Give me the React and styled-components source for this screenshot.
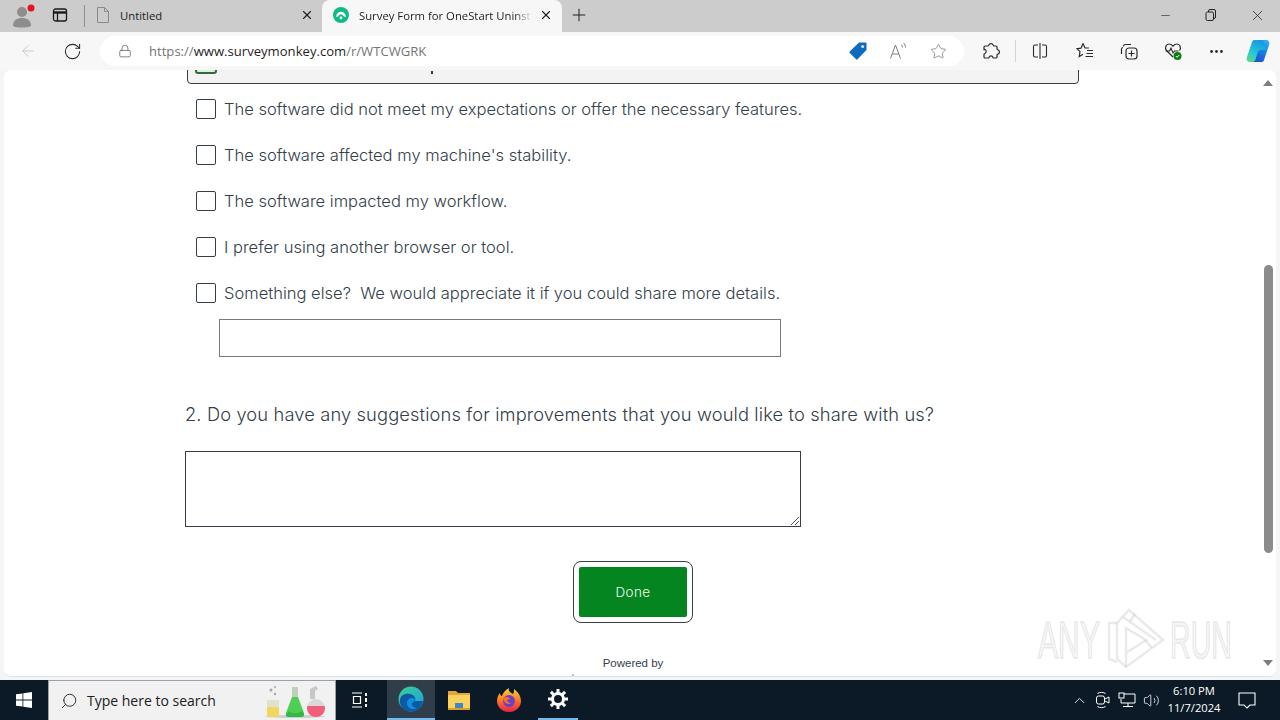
import React from 'react';
import styled, { createGlobalStyle } from 'styled-components';
import { ArrowLeft, RotateCw, Lock, Star, Plus, X, Minus, Ellipsis, ChevronUp, Volume2, Search } from 'lucide-react';

const GlobalStyle = createGlobalStyle`
  html, body {
    margin: 0;
    padding: 0;
    width: 1280px;
    height: 720px;
    overflow: hidden;
    background: #f7f7f7;
  }
  * { box-sizing: border-box; }
`;

const Screen = styled.div`
  width: 1280px;
  height: 720px;
  display: flex;
  flex-direction: column;
  font-family: 'Open Sans', 'Noto Sans', sans-serif;
`;

/* tab strip */
const TabStrip = styled.div`
  height: 32px;
  display: flex;
  align-items: flex-end;
  background: #cccccc;
  flex: none;
`;

const Slot = styled.div`
  width: ${(p) => p.$w}px;
  height: ${(p) => p.$h || 32}px;
  margin-left: ${(p) => p.$ml || 0}px;
  padding-bottom: ${(p) => p.$pb || 0}px;
  flex: none;
  display: flex;
  align-items: center;
  justify-content: center;
  color: ${(p) => p.$color || '#2b2b2b'};
`;

const StripDivider = styled.div`
  width: 1px;
  height: 22px;
  margin-bottom: 5px;
  background: #8e8e8e;
  flex: none;
`;

const Tab = styled.div`
  width: ${(p) => p.$w}px;
  margin-left: ${(p) => p.$ml || 0}px;
  height: 32px;
  flex: none;
  display: flex;
  align-items: center;
  background: ${(p) => (p.$active ? '#f7f7f7' : 'transparent')};
  border-radius: 8px 8px 0 0;
  padding: 0 ${(p) => p.$pr || 0}px 2px 11px;
`;

const TabTitle = styled.div`
  flex: 1;
  min-width: 0;
  margin-left: ${(p) => p.$ml}px;
  font-size: 11.3px;
  color: #1d1d1d;
  white-space: nowrap;
  overflow: hidden;
  ${(p) => p.$fade && 'mask-image: linear-gradient(to right, #000 90%, transparent 100%);'}
`;

const TabClose = styled.div`
  width: 28px;
  flex: none;
  display: flex;
  justify-content: center;
  color: #222;
`;

const StripSpacer = styled.div`
  flex: 1;
`;

/* address row */
const ToolRow = styled.div`
  height: 38px;
  display: flex;
  align-items: center;
  background: #f7f7f7;
  flex: none;
  position: relative;
  z-index: 2;
`;

const AddressBar = styled.div`
  width: 864px;
  height: 30px;
  margin-left: 16px;
  flex: none;
  background: #ffffff;
  border-radius: 15px;
  display: flex;
  align-items: center;
`;

const Url = styled.div`
  flex: 1;
  margin-left: 16px;
  padding-bottom: 1px;
  font-size: 13.1px;
  color: #757575;
  white-space: nowrap;
`;

const UrlHost = styled.span`
  color: #1f1f1f;
`;

const ToolDivider = styled.div`
  width: 1px;
  height: 22px;
  background: #d4d4d4;
  flex: none;
  margin-left: 14px;
`;

/* page area */
const Viewport = styled.div`
  flex: 1;
  min-height: 0;
  background: #f3f5f7;
  padding: 0 4px 3px;
  position: relative;
`;

const PagePanel = styled.div`
  height: 100%;
  background: #ffffff;
  border-radius: 7px;
  overflow: hidden;
  position: relative;
  padding-left: 181px;
  border-bottom: 1px solid #dfe3e6;
  font-family: 'Inter', 'Liberation Sans', sans-serif;
  color: #333e48;
`;

const SelectedRow = styled.div`
  width: 892px;
  height: 42px;
  margin: -28px 0 0 2px;
  padding: 0 0 9px 7px;
  background: #f3f3f3;
  border: 1px solid #3d3d3d;
  border-radius: 0 0 4px 4px;
  display: flex;
  align-items: flex-end;
`;

const CheckedBox = styled.span`
  width: 22px;
  height: 20px;
  background: #dff0e2;
  border: 2px solid #2f6b3d;
  border-radius: 3px;
  flex: none;
`;

const Descender = styled.span`
  width: 2px;
  height: 3px;
  margin: 0 0 0 214px;
  background: #333e48;
  flex: none;
`;

const Choices = styled.div`
  display: flex;
  flex-direction: column;
  gap: 24px;
  margin: 14px 0 0 11px;
`;

const Choice = styled.label`
  display: flex;
  align-items: center;
  gap: 8px;
  height: 22px;
  font-size: 16.55px;
  font-weight: 300;
  white-space: pre;
`;

const Box = styled.span`
  width: 20px;
  height: 20px;
  border: 1px solid #333e48;
  border-radius: 2px;
  flex: none;
`;

const OtherInput = styled.div`
  width: 562px;
  height: 38px;
  margin: 15px 0 0 34px;
  border: 1px solid #767b80;
`;

const Question = styled.div`
  margin-top: 45px;
  height: 24px;
  line-height: 24px;
  font-size: 18.3px;
  font-weight: 300;
  letter-spacing: 0.13px;
  white-space: nowrap;
`;

const Answer = styled.div`
  width: 616px;
  height: 76px;
  margin-top: 25px;
  border: 1px solid #333e48;
  position: relative;
`;

const Grip = styled.svg`
  position: absolute;
  right: 0;
  bottom: 0;
`;

const DoneWrap = styled.div`
  width: 120px;
  height: 62px;
  margin: 34px 0 0 388px;
  padding: 5px;
  border: 1px solid #3d3d3d;
  border-radius: 8px;
`;

const DoneButton = styled.div`
  height: 100%;
  background: #05851f;
  border-radius: 2px;
  color: #f0fff0;
  font-size: 13.5px;
  font-weight: 300;
  letter-spacing: 0.4px;
  display: flex;
  align-items: center;
  justify-content: center;
`;

const Powered = styled.div`
  width: 120px;
  margin: 34px 0 0 388px;
  text-align: center;
  font-family: 'Liberation Sans', sans-serif;
  font-size: 11.5px;
  color: #333e48;
`;

const LogoTip = styled.div`
  width: 2px;
  height: 2px;
  margin: 5px 0 0 387px;
  border-radius: 50%;
  background: #7fbfb0;
`;

const ScrollTrack = styled.div`
  position: absolute;
  top: 0;
  right: 0;
  width: 16px;
  height: 100%;
  display: flex;
  flex-direction: column;
  align-items: center;
  justify-content: space-between;
  padding: 10px 0 10px;
`;

const ScrollThumb = styled.div`
  position: absolute;
  top: 195px;
  left: 4px;
  width: 9px;
  height: 288px;
  border-radius: 5px;
  background: #8b8b8b;
`;

const Arrow = styled.div`
  width: 0;
  height: 0;
  border-left: 5px solid transparent;
  border-right: 5px solid transparent;
  ${(p) => (p.$down ? 'border-top: 6px solid #7e7e7e;' : 'border-bottom: 6px solid #7e7e7e;')}
`;

const Watermark = styled.div`
  position: absolute;
  left: 1038px;
  top: 538px;
  display: flex;
  align-items: center;
  pointer-events: none;
  filter: blur(0.6px);
`;

const WatermarkWord = styled.div`
  width: 62px;
  margin-left: ${(p) => p.$ml || 0}px;
  flex: none;
  font-family: 'Liberation Sans', sans-serif;
  font-size: 52px;
  line-height: 52px;
  white-space: nowrap;
  color: rgba(210, 210, 210, 0.18);
  -webkit-text-stroke: 2px rgba(190, 190, 190, 0.28);
  transform: scaleX(${(p) => p.$sx});
  transform-origin: left center;
`;

const WatermarkMark = styled.svg`
  margin-left: 8px;
  flex: none;
`;

/* taskbar */
const Taskbar = styled.div`
  height: 40px;
  flex: none;
  display: flex;
  background: #0c1a27;
  color: #fff;
`;

const SearchBox = styled.div`
  width: 288px;
  height: 40px;
  flex: none;
  background: #f1f1f1;
  border: 1px solid #9aa0a6;
  border-bottom: none;
  display: flex;
  align-items: center;
  padding-left: 11px;
  color: #202020;
`;

const SearchLabel = styled.span`
  margin-left: 9px;
  flex: 1;
  font-family: 'Open Sans', sans-serif;
  font-size: 14px;
`;

const TaskCell = styled.div`
  width: ${(p) => p.$w}px;
  margin-left: ${(p) => p.$ml || 0}px;
  height: 40px;
  flex: none;
  display: flex;
  align-items: center;
  justify-content: center;
  background: ${(p) => (p.$open ? '#2f3e4a' : 'transparent')};
  border-bottom: ${(p) => (p.$running ? '2px solid #76b9ed' : 'none')};
`;

const Clock = styled.div`
  width: 60px;
  margin-left: 1px;
  flex: none;
  text-align: center;
  font-family: 'Open Sans', sans-serif;
  font-size: 11.2px;
  line-height: 17px;
  padding-top: 2px;
  color: #ffffff;
`;

const TaskSpacer = styled.div`
  flex: 1;
`;

const rows = [
  'The software did not meet my expectations or offer the necessary features.',
  "The software affected my machine's stability.",
  'The software impacted my workflow.',
  'I prefer using another browser or tool.',
  'Something else?  We would appreciate it if you could share more details.',
];

const Profile = () => (
  <svg width="28" height="26" viewBox="0 0 28 26">
    <circle cx="14" cy="10" r="5" fill="#8d8d8d" />
    <path d="M5 24c0-6 4-8 9-8s9 2 9 8c-4 2-14 2-18 0z" fill="#8d8d8d" />
    <circle cx="23" cy="6" r="3.5" fill="#e81123" />
  </svg>
);

const Workspace = () => (
  <svg width="16" height="16" viewBox="0 0 16 16" fill="none" stroke="#1a1a1a" strokeWidth="1.3">
    <rect x="1.5" y="2" width="13" height="12" rx="2" />
    <path d="M1.5 5.5h13" strokeWidth="2.4" />
    <path d="M5.5 5v9" />
  </svg>
);

const DocIcon = () => (
  <svg width="14" height="16" viewBox="0 0 14 16" fill="none" stroke="#8a8a8a">
    <path d="M1.5.5h7l4 4v11h-11zM8.500.5v4h4" />
  </svg>
);

const MonkeyFav = () => (
  <svg width="16" height="16" viewBox="0 0 16 16">
    <circle cx="8" cy="8" r="8" fill="#12b886" />
    <path d="M3 9.500C3.500 6.500 5.500 4.800 8 4.800s4.500 1.700 5 4.700c-1 .6-2 .3-2.600-.5C10 8 9 7.600 8 7.600S6 8 5.600 9c-.6.8-1.600 1.100-2.600.5z" fill="#fff" />
    <circle cx="8" cy="11" r="1.400" fill="#fff" />
  </svg>
);

const PriceTag = () => (
  <svg width="18" height="18" viewBox="0 0 18 18">
    <path d="M10 .5h6.500a1 1 0 0 1 1 1V8L8.500 17.300a1 1 0 0 1-1.400 0L.7 10.900a1 1 0 0 1 0-1.400z" fill="#0f6cbd" />
    <circle cx="13.600" cy="4.400" r="1.500" fill="#cfe6fa" />
  </svg>
);

const ReadAloud = () => (
  <svg width="18" height="18" viewBox="0 0 18 18" fill="none" stroke="#7c7c7c" strokeWidth="1">
    <path d="M1.500 16.500 6.500 3l5 13.500M3.200 12h6.600" />
    <path d="M12 2.500c1 .8 1.500 1.800 1.500 3M14.500 1c1.400 1.200 2 2.700 2 4.500" />
  </svg>
);

const PuzzleOutline = () => (
  <svg width="18" height="18" viewBox="0 0 18 18" fill="none" stroke="#2a2a2a" strokeWidth="1.200" strokeLinejoin="round">
    <path d="M6.800 3.200a2.300 2.300 0 0 1 4.400 0c.1.500.4.800 1 .8h1.800a1 1 0 0 1 1 1v1.800c0 .6.300.9.800 1a2.300 2.300 0 0 1 0 4.400c-.5.100-.8.400-.8 1V15a1 1 0 0 1-1 1h-2.200c-.5 0-.7-.3-.9-.8a2 2 0 0 0-3.800 0c-.2.500-.4.800-.9.800H3a1 1 0 0 1-1-1v-2.600c0-.5.300-.7.800-.9a2.300 2.300 0 0 0 0-4.200C2.300 8.100 2 7.900 2 7.400V5a1 1 0 0 1 1-1h2.800c.5 0 .9-.3 1-.8z" />
  </svg>
);

const SplitIcon = () => (
  <svg width="18" height="18" viewBox="0 0 18 18" fill="none" stroke="#2a2a2a" strokeWidth="1.100">
    <path d="M7 3H4a1.500 1.500 0 0 0-1.500 1.500v9A1.500 1.500 0 0 0 4 15h3M11 3h3a1.500 1.500 0 0 1 1.500 1.500v9A1.500 1.500 0 0 1 14 15h-3M9 1v16" />
  </svg>
);

const FavBar = () => (
  <svg width="18" height="18" viewBox="0 0 18 18" fill="none" stroke="#2a2a2a" strokeWidth="1.200">
    <path d="M7 1.500 9 6h4M7 1.500 5 6.200 1 6.700l3 3-.8 4.800L7 12.200" />
    <path d="M11 8.500h6M10.500 11.500h6.500M9.500 14.500h7.500" />
  </svg>
);

const Collections = () => (
  <svg width="18" height="18" viewBox="0 0 18 18" fill="none" stroke="#2a2a2a" strokeWidth="1.200">
    <path d="M5 2.500h6M3 5.500C2 5.700 1.500 6.200 1.500 7v5" />
    <rect x="6" y="6" width="11" height="11" rx="3" />
    <path d="M11.500 8.500v6M8.500 11.500h6" />
    <path d="M3.500 4.500c0-1 .7-2 2-2" />
  </svg>
);

const HealthIcon = () => (
  <svg width="20" height="20" viewBox="0 0 20 20" fill="none">
    <path d="M10 16 3.500 9.500C1.500 7 3 3 6 3c2 0 3 1 4 2.200C11 4 12 3 14 3c3 0 4.500 4 2.500 6.500" stroke="#2a2a2a" strokeWidth="1.200" />
    <path d="M2.500 10h4l1.500-3 2 5 1.500-2h4" stroke="#2a2a2a" strokeWidth="1.100" />
    <circle cx="14.500" cy="15" r="4" fill="#107c10" />
    <path d="m12.800 15 1.300 1.300 2.200-2.400" stroke="#fff" strokeWidth="1" />
  </svg>
);

const CopilotLobe = 'M8 1h8c1 0 1.500.5 1.800 1.500L20 9c.3 1 0 2-1 2h-4c-2 0-3 1-3.500 3L9.500 20.500c-.4 1.500-1.500 2.500-3 2.500H4c-2.500 0-4-2-3.200-4.500L6 3c.4-1.200 1-2 2-2z';

const Copilot = () => (
  <svg width="24" height="24" viewBox="0 0 24 24">
    <defs>
      <linearGradient id="cpA" x1="0.7" y1="0" x2="0.2" y2="1">
        <stop offset="0" stopColor="#1597e8" />
        <stop offset="0.6" stopColor="#25c7d0" />
        <stop offset="1" stopColor="#5fd98a" />
      </linearGradient>
      <linearGradient id="cpB" x1="0.7" y1="0" x2="0.2" y2="1">
        <stop offset="0" stopColor="#1a4fd0" />
        <stop offset="0.6" stopColor="#1d83e6" />
        <stop offset="1" stopColor="#28b4ef" />
      </linearGradient>
    </defs>
    <path d={CopilotLobe} fill="url(#cpB)" transform="rotate(180 12 12)" />
    <path d={CopilotLobe} fill="url(#cpA)" />
  </svg>
);

const WinLogo = () => (
  <svg width="16" height="16" viewBox="0 0 16 16" fill="#fff">
    <path d="M0 2.300 6.500 1.400v6.100H0zM7.300 1.300 16 0v7.500H7.300zM0 8.400h6.500v6.200L0 13.700zM7.300 8.400H16V16l-8.700-1.300z" />
  </svg>
);

const Flasks = () => (
  <svg width="64" height="34" viewBox="0 0 64 34">
    <ellipse cx="32" cy="32.500" rx="30" ry="1.500" fill="#cfcfcf" />
    <circle cx="8" cy="6" r="1.500" fill="#9aa7ad" />
    <circle cx="12" cy="3" r="1.200" fill="#b4bfc4" />
    <circle cx="12" cy="10" r="1.200" fill="#9aa7ad" />
    <path d="M3 16h14l-1 1v14c0 1.500-.8 2-2 2H6c-1.200 0-2-.5-2-2V17z" fill="#e3e0cf" />
    <path d="M4 23h12v8c0 1.500-.8 2-2 2H6c-1.200 0-2-.5-2-2z" fill="#f0d860" />
    <path d="M29 3h6v10h-6z" fill="#bcd0bc" />
    <path d="M29 13h6l6 16c.7 2.500-.5 4-3 4H26c-2.500 0-3.700-1.500-3-4z" fill="#4fce55" />
    <path d="M26 27c2 3 9 3 13 0l2 3c.3 2-.8 3-3 3H26c-2.200 0-3.300-1-3-3z" fill="#33b844" />
    <path d="m47 5 6-3 2 3-3 2v8h-5z" fill="#c7c7c7" />
    <circle cx="53" cy="24" r="9" fill="#dcd8d8" />
    <path d="M44.300 22h17.400c1.300 6-3 11-8.700 11s-10-5-8.700-11z" fill="#ef5f78" />
  </svg>
);

const TaskView = () => (
  <svg width="18" height="16" viewBox="0 0 18 16" fill="none" stroke="#fff" strokeWidth="1.200">
    <path d="M1 1h10M1 15h10M2.500 4.500h7v7h-7z" />
    <path d="M15 1v3M15 6v4M15 12v3" strokeWidth="2" />
  </svg>
);

const EdgeLogo = () => (
  <svg width="26" height="26" viewBox="0 0 26 26">
    <defs>
      <linearGradient id="edA" x1="0" y1="0" x2="1" y2="1">
        <stop offset="0" stopColor="#3bd08f" />
        <stop offset="1" stopColor="#1b9de2" />
      </linearGradient>
    </defs>
    <circle cx="13" cy="13" r="12.500" fill="url(#edA)" />
    <path d="M2 17C1 9 7 7 12 8c5 1 6 5 5 7h8c-1 6-6 10.500-12 10.500C7 25.500 3 22 2 17z" fill="#0c59a4" />
    <path d="M9 17c0-3 2-5 5-5 2 0 3 1 3 3-1 1.500-3 1-3 3 0 2 2 4 5 4-5 3-10 0-10-5z" fill="#0f8fdc" />
  </svg>
);

const FolderIcon = () => (
  <svg width="24" height="22" viewBox="0 0 24 22">
    <path d="M1 2h8l2 2h12v4H1z" fill="#e2a93a" />
    <path d="M1 6h22v15H1z" fill="#fbd25d" />
    <path d="M8 14h8v5H8z" fill="#3f87c8" />
    <path d="M1 19h22v2H1z" fill="#d79f2e" />
  </svg>
);

const FirefoxLogo = () => (
  <svg width="24" height="26" viewBox="0 0 24 26">
    <defs>
      <linearGradient id="ffA" x1="0" y1="0" x2="0" y2="1">
        <stop offset="0" stopColor="#ffd43a" />
        <stop offset="0.5" stopColor="#ff7a1f" />
        <stop offset="1" stopColor="#e5224d" />
      </linearGradient>
    </defs>
    <path d="M12 25C5 25 0 20 0 14c0-3 1-6 3-8 0 2 1 3 2 3 1-3 3-6 7-8-1 3 1 4 4 6 1-1 1-3 1-5 4 3 7 7 7 12 0 6-5 11-12 11z" fill="url(#ffA)" />
    <circle cx="12" cy="14" r="6" fill="#6b3fc7" />
    <path d="M6 11c3-2 6-1 7 1l-3 1c0 2 2 3 4 3-2 2-7 1-8-5z" fill="#f47421" />
  </svg>
);

const Gear = () => (
  <svg width="20" height="20" viewBox="0 0 20 20" fill="none">
    <circle cx="10" cy="10" r="5.500" stroke="#fff" strokeWidth="3" />
    <path d="M10 0v4M10 16v4M0 10h4M16 10h4M2.900 2.900l2.800 2.800M14.300 14.300l2.800 2.800M2.900 17.100l2.800-2.800M14.300 5.700l2.800-2.800" stroke="#fff" strokeWidth="3" />
  </svg>
);

const MeetIcon = () => (
  <svg width="16" height="18" viewBox="0 0 16 18" fill="none" stroke="#fff" strokeWidth="1">
    <rect x="1.500" y="5" width="8" height="8" rx="2" />
    <path d="m10 8 4-2v6l-4-2M2.500 2.500c2-1.500 6-1.500 8 0M2.500 15.500c2 1.500 6 1.500 8 0" />
  </svg>
);

const NetIcon = () => (
  <svg width="18" height="16" viewBox="0 0 18 16" fill="none" stroke="#fff" strokeWidth="1">
    <path d="M5 2h12v9H3V7M10 11v3M5 14.500h10" />
    <rect x="1" y="1" width="5" height="5" fill="#0c1a27" />
  </svg>
);

const ChatIcon = () => (
  <svg width="18" height="17" viewBox="0 0 18 17" fill="none" stroke="#fff" strokeWidth="1.100">
    <path d="M1 1h16v12h-5l-3 3-3-3H1z" />
  </svg>
);

const AnyRunMark = () => (
  <WatermarkMark width="57" height="64" viewBox="0 0 57 64" fill="none" stroke="rgba(185,185,185,0.3)" strokeWidth="2.500">
    <path d="M9 15H1v36l8 3" />
    <path d="M9 15v36l9 8 37-27L21 2 9 15z" />
    <path d="M15 9l33 23M18 59V20l20 12-20 13" />
    <path d="M27 6l-5 7M44 40l-7-8" />
  </WatermarkMark>
);

const App = () => (
  <Screen>
    <GlobalStyle />
    <TabStrip>
      <Slot $w={28} $ml={8} $pb={2}><Profile /></Slot>
      <Slot $w={32} $ml={8} $pb={2}><Workspace /></Slot>
      <Slot $w={8} />
      <StripDivider />
      <Tab $w={236}>
        <DocIcon />
        <TabTitle $ml={10}>Untitled</TabTitle>
        <TabClose><X size={14} /></TabClose>
      </Tab>
      <Tab $w={240} $ml={1} $pr={2} $active>
        <MonkeyFav />
        <TabTitle $ml={10} $fade>Survey Form for OneStart Uninst</TabTitle>
        <TabClose><X size={14} /></TabClose>
      </Tab>
      <Slot $w={34} $pb={2}><Plus size={20} strokeWidth={1.2} color="#222" /></Slot>
      <StripSpacer />
      <Slot $w={46} $pb={2}><Minus size={13} strokeWidth={1.2} /></Slot>
      <Slot $w={46} $pb={2}>
        <svg width="12" height="12" viewBox="0 0 12 12" fill="none" stroke="#222">
          <rect x="1" y="3" width="7.500" height="8.500" rx="1.500" />
          <path d="M3.500 3V2A1.500 1.500 0 0 1 5 .5h4A1.500 1.500 0 0 1 10.500 2v6A1.500 1.500 0 0 1 9 9.500" />
        </svg>
      </Slot>
      <Slot $w={46} $pb={2}><X size={17} strokeWidth={1.1} /></Slot>
    </TabStrip>

    <ToolRow>
      <Slot $w={24} $h={38} $ml={16} $color="#c2c2c2"><ArrowLeft size={18} strokeWidth={1.2} /></Slot>
      <Slot $w={24} $h={38} $ml={20}><RotateCw size={19} strokeWidth={1.3} /></Slot>
      <AddressBar>
        <Slot $w={16} $h={30} $ml={17} $color="#555"><Lock size={14} strokeWidth={1.2} /></Slot>
        <Url>https://<UrlHost>www.surveymonkey.com</UrlHost>/r/WTCWGRK</Url>
        <Slot $w={20} $h={30}><PriceTag /></Slot>
        <Slot $w={20} $h={30} $ml={20}><ReadAloud /></Slot>
        <Slot $w={20} $h={30} $ml={20} $color="#7c7c7c"><Star size={17} strokeWidth={1.1} /></Slot>
        <Slot $w={16} $h={30} />
      </AddressBar>
      <Slot $w={20} $h={38} $ml={17}><PuzzleOutline /></Slot>
      <ToolDivider />
      <Slot $w={24} $h={38} $ml={12}><SplitIcon /></Slot>
      <Slot $w={24} $h={38} $ml={21}><FavBar /></Slot>
      <Slot $w={24} $h={38} $ml={20}><Collections /></Slot>
      <Slot $w={24} $h={38} $ml={20}><HealthIcon /></Slot>
      <Slot $w={24} $h={38} $ml={19}><Ellipsis size={17} /></Slot>
      <Slot $w={26} $h={38} $ml={17}><Copilot /></Slot>
    </ToolRow>

    <Viewport>
      <PagePanel>
        <SelectedRow>
          <CheckedBox />
          <Descender />
        </SelectedRow>
        <Choices>
          {rows.map((text) => (
            <Choice key={text}>
              <Box />
              <span>{text}</span>
            </Choice>
          ))}
        </Choices>
        <OtherInput />
        <Question>2. Do you have any suggestions for improvements that you would like to share with us?</Question>
        <Answer>
          <Grip width="11" height="11" viewBox="0 0 11 11" stroke="#555">
            <path d="M2 10 10 2M6 10l4-4" />
          </Grip>
        </Answer>
        <DoneWrap><DoneButton>Done</DoneButton></DoneWrap>
        <Powered>Powered by</Powered>
        <LogoTip />
        <ScrollTrack>
          <Arrow />
          <ScrollThumb />
          <Arrow $down />
        </ScrollTrack>
      </PagePanel>
      <Watermark>
        <WatermarkWord $sx={0.58}>ANY</WatermarkWord>
        <AnyRunMark />
        <WatermarkWord $ml={5} $sx={0.55}>RUN</WatermarkWord>
      </Watermark>
    </Viewport>

    <Taskbar>
      <TaskCell $w={48}><WinLogo /></TaskCell>
      <SearchBox>
        <Search size={18} strokeWidth={1.2} style={{ transform: 'scaleX(-1)' }} />
        <SearchLabel>Type here to search</SearchLabel>
        <Flasks />
        <Slot $w={8} $h={20} />
      </SearchBox>
      <TaskCell $w={48}><TaskView /></TaskCell>
      <TaskCell $w={48} $ml={3} $open $running><EdgeLogo /></TaskCell>
      <TaskCell $w={48}><FolderIcon /></TaskCell>
      <TaskCell $w={52}><FirefoxLogo /></TaskCell>
      <TaskCell $w={40} $ml={3} $running><Gear /></TaskCell>
      <TaskSpacer />
      <TaskCell $w={24}><ChevronUp size={17} strokeWidth={1.2} /></TaskCell>
      <TaskCell $w={24}><MeetIcon /></TaskCell>
      <TaskCell $w={24}><NetIcon /></TaskCell>
      <TaskCell $w={24}><Volume2 size={17} strokeWidth={1.1} /></TaskCell>
      <Clock>6:10 PM<br />11/7/2024</Clock>
      <TaskCell $w={42} $ml={2}><ChatIcon /></TaskCell>
      <TaskCell $w={12} />
    </Taskbar>
  </Screen>
);

export default App;
